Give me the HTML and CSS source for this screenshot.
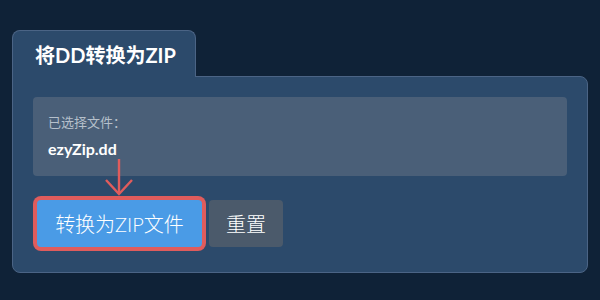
FILE: index.html
```html
<!DOCTYPE html>
<html lang="zh-CN">
<head>
    <meta charset="UTF-8">
    <meta name="viewport" content="width=device-width, initial-scale=1.0">
    <title>将DD转换为ZIP</title>
    <link rel="stylesheet" href="styles.css">
</head>
<body>
    <div class="converter">
        <div class="tab">
            <h1 class="tab-title">将DD转换为ZIP</h1>
        </div>
        <div class="panel">
            <div class="file-box">
                <div class="file-label">已选择文件：</div>
                <div class="file-name">ezyZip.dd</div>
            </div>
            <div class="actions">
                <svg class="hint-arrow" width="30" height="38" viewBox="0 0 30 38">
                    <line x1="15" y1="1" x2="15" y2="36" stroke="#e05c5c" stroke-width="2.4"/>
                    <polyline points="2,22 15,36 28,22" fill="none" stroke="#e05c5c" stroke-width="2.4"/>
                </svg>
                <button class="btn btn-convert">转换为ZIP文件</button>
                <button class="btn btn-reset">重置</button>
            </div>
        </div>
    </div>
</body>
</html>
```

FILE: styles.css
```css
* {
    margin: 0;
    padding: 0;
    box-sizing: border-box;
    font-family: Lato, "Noto Sans CJK SC", sans-serif;
}
body {
    background-color: #0f2237;
    padding: 30px 12px;
}
.converter {
    width: 576px;
}
.tab {
    display: inline-block;
    position: relative;
    z-index: 1;
    margin-bottom: -1px;
    width: 184px;
    padding: 13px 0 10px 22px;
    background-color: #2c4a6b;
    border: 1px solid #4b6485;
    border-bottom: none;
    border-radius: 8px 8px 0 0;
}
.tab-title {
    font-size: 20px;
    line-height: 23px;
    font-weight: bold;
    color: #fff;
}
.panel {
    background-color: #2c4a6b;
    border: 1px solid #4b6485;
    border-radius: 0 8px 8px 8px;
    padding: 20px 20px 25px;
}
.file-box {
    background-color: #4a5f78;
    border-radius: 4px;
    padding: 16px 15px 15px;
    height: 79px;
}
.file-label {
    font-size: 13px;
    line-height: 18px;
    color: #b6c0cb;
    margin-bottom: 8px;
}
.file-name {
    font-size: 16px;
    line-height: 20px;
    font-weight: bold;
    color: #fff;
}
.actions {
    position: relative;
    display: flex;
    gap: 7px;
    margin-top: 24px;
    padding-left: 4px;
}
.hint-arrow {
    position: absolute;
    left: 71px;
    top: -42px;
}
.btn {
    height: 47px;
    border: none;
    border-radius: 4px;
    font-size: 20px;
    font-weight: 300;
    color: #fff;
    cursor: pointer;
}
.btn-convert {
    width: 165px;
    background-color: #4a9be6;
    box-shadow: 0 0 0 4px #e05c5c;
}
.btn-reset {
    width: 74px;
    background-color: #4b5a6b;
}
```
